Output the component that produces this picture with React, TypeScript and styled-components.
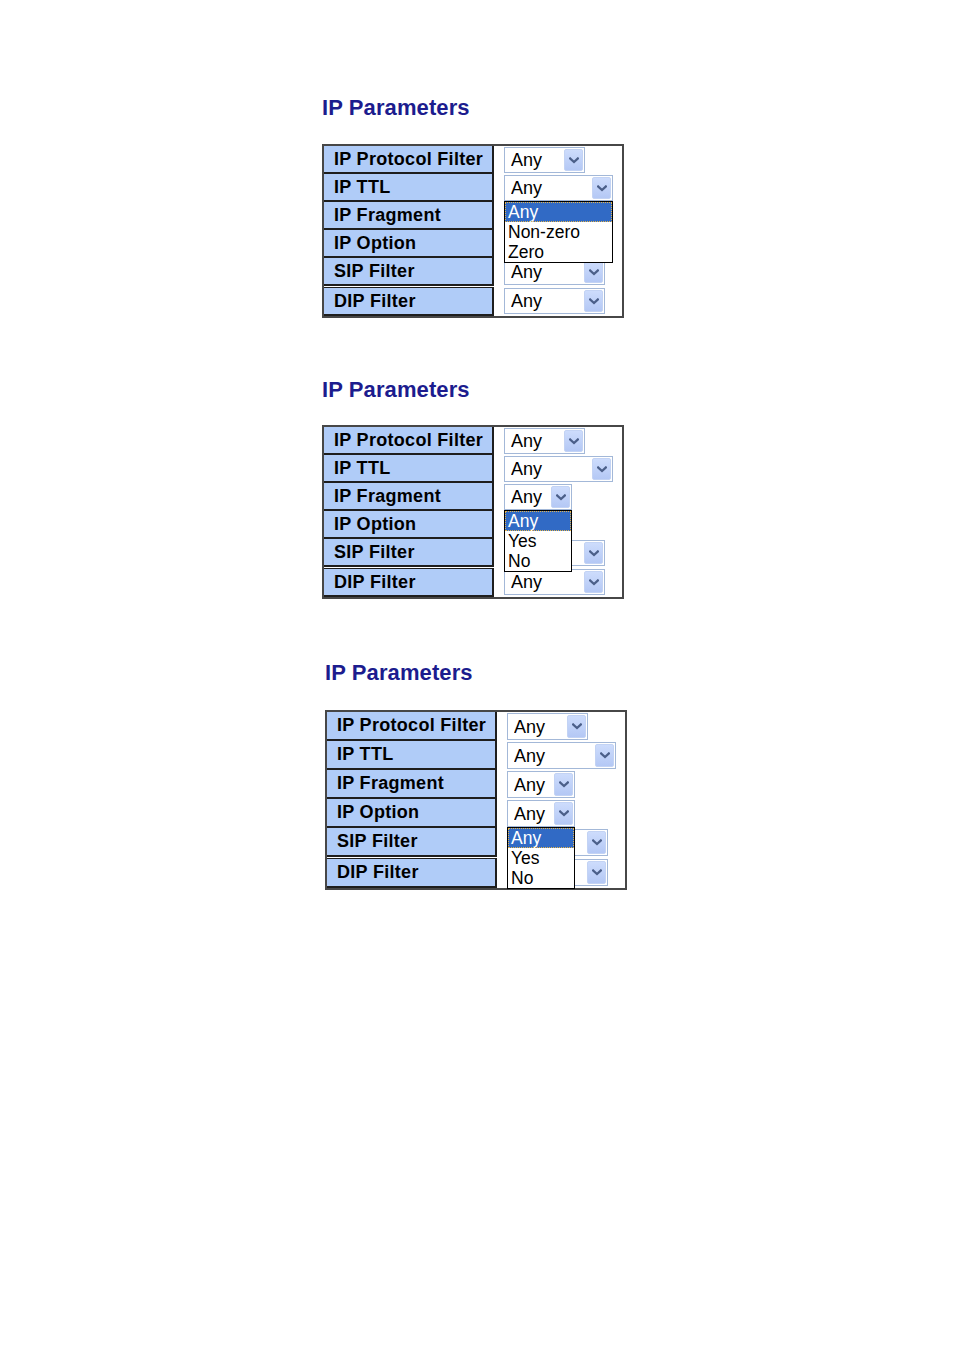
import React from "react";
import styled, { createGlobalStyle } from "styled-components";

const GlobalStyle = createGlobalStyle`
  html, body { margin: 0; padding: 0; background: #ffffff; }
  body { font-family: "Liberation Sans", Arial, sans-serif; color: #000; }
  * { box-sizing: border-box; }
`;

const Page = styled.div`
  padding: 95px 0 120px 322px;
`;

const Panel = styled.section<{ $shift: number; $top: number }>`
  margin-left: ${(p) => p.$shift}px;
  padding-top: ${(p) => p.$top}px;
  margin-bottom: 59px;
`;

const Title = styled.h2<{ $gap: number }>`
  margin: 0 0 ${(p) => p.$gap}px;
  font-family: "Liberation Sans", Arial, sans-serif;
  font-size: 22px;
  font-weight: bold;
  line-height: 26px;
  letter-spacing: 0.1px;
  color: #1c1c8e;
`;

const Table = styled.div`
  display: flex;
  flex-direction: column;
  width: 302px;
  border: 2px solid #474747;
  background: #ffffff;
`;

const Row = styled.div<{ $split: boolean }>`
  display: flex;
  margin-top: ${(p) => (p.$split ? 1 : 0)}px;
`;

const Label = styled.div<{ $split: boolean; $h: number }>`
  width: 170px;
  height: ${(p) => p.$h + 2 + (p.$split ? 1 : 0)}px;
  padding-left: 10px;
  background: #b0ccf8;
  border-right: 2px solid #1e1e1e;
  border-bottom: 2px solid #1e1e1e;
  border-top: ${(p) => (p.$split ? "1px solid #1e1e1e" : "none")};
  font-size: 18px;
  font-weight: bold;
  letter-spacing: 0.3px;
  line-height: ${(p) => p.$h}px;
  white-space: nowrap;
  color: #000;
`;

const Value = styled.div`
  flex: 1;
  display: flex;
  align-items: flex-start;
  padding-left: 10px;
`;

const SelectBox = styled.div<{ $w: number; $h: number }>`
  position: relative;
  width: ${(p) => p.$w}px;
  height: ${(p) => p.$h}px;
  margin-top: 1px;
  border: 1px solid #a3b8d8;
  background: #ffffff;
  display: flex;
  align-items: center;
  padding: 1px 1px 1px 6px;
`;

const SelectText = styled.span`
  flex: 1;
  font-size: 18px;
  line-height: 22px;
  color: #000;
  white-space: nowrap;
  overflow: hidden;
`;

const ArrowButton = styled.span`
  width: 19px;
  height: 100%;
  display: flex;
  align-items: center;
  justify-content: center;
  border: 1px solid #c3d3f4;
  border-radius: 2px;
  background: linear-gradient(#cddcfc, #b4c8f5);
`;

const List = styled.ul`
  position: absolute;
  z-index: 10;
  top: calc(100% + 1px);
  left: -1px;
  right: -1px;
  margin: 0;
  padding: 0;
  list-style: none;
  background: #ffffff;
  border: 1px solid #000000;
`;

const Item = styled.li<{ $active: boolean }>`
  height: 20px;
  padding-left: 3px;
  font-size: 17.5px;
  line-height: 20px;
  white-space: nowrap;
  color: ${(p) => (p.$active ? "#ffffff" : "#000000")};
  background: ${(p) => (p.$active ? "#316ac5" : "transparent")};
  outline: ${(p) => (p.$active ? "1px dotted #e4b44c" : "none")};
  outline-offset: -1px;
`;

const Chevron = () => (
  <svg width="10" height="7" viewBox="0 0 10 7" aria-hidden="true">
    <path d="M1.2 1.5 L5 5 L8.8 1.5" fill="none" stroke="#4b5f89" strokeWidth="2.3" strokeLinecap="square" />
  </svg>
);

type SelectProps = { width: number; height: number; options?: string[] };

const Select = ({ width, height, options }: SelectProps) => (
  <SelectBox $w={width} $h={height}>
    <SelectText>Any</SelectText>
    <ArrowButton>
      <Chevron />
    </ArrowButton>
    {options && (
      <List>
        {options.map((o, i) => (
          <Item key={o} $active={i === 0}>
            {o}
          </Item>
        ))}
      </List>
    )}
  </SelectBox>
);

const labels = ["IP Protocol Filter", "IP TTL", "IP Fragment", "IP Option", "SIP Filter", "DIP Filter"];
const widths = [81, 109, 68, 68, 101, 101];

const panels = [
  { shift: 0, top: 0, gap: 23, rowH: 26, open: 1, options: ["Any", "Non-zero", "Zero"] },
  { shift: 0, top: 0, gap: 22, rowH: 26, open: 2, options: ["Any", "Yes", "No"] },
  { shift: 3, top: 2, gap: 24, rowH: 27, open: 3, options: ["Any", "Yes", "No"] },
];

export default function App() {
  return (
    <>
      <GlobalStyle />
      <Page>
        {panels.map((p, pi) => (
          <Panel key={pi} $shift={p.shift} $top={p.top}>
            <Title $gap={p.gap}>IP Parameters</Title>
            <Table>
              {labels.map((l, i) => (
                <Row key={l} $split={i === 5}>
                  <Label $split={i === 5} $h={p.rowH}>
                    {l}
                  </Label>
                  <Value>
                    <Select
                      width={widths[i]}
                      height={p.rowH}
                      options={i === p.open ? p.options : undefined}
                    />
                  </Value>
                </Row>
              ))}
            </Table>
          </Panel>
        ))}
      </Page>
    </>
  );
}
